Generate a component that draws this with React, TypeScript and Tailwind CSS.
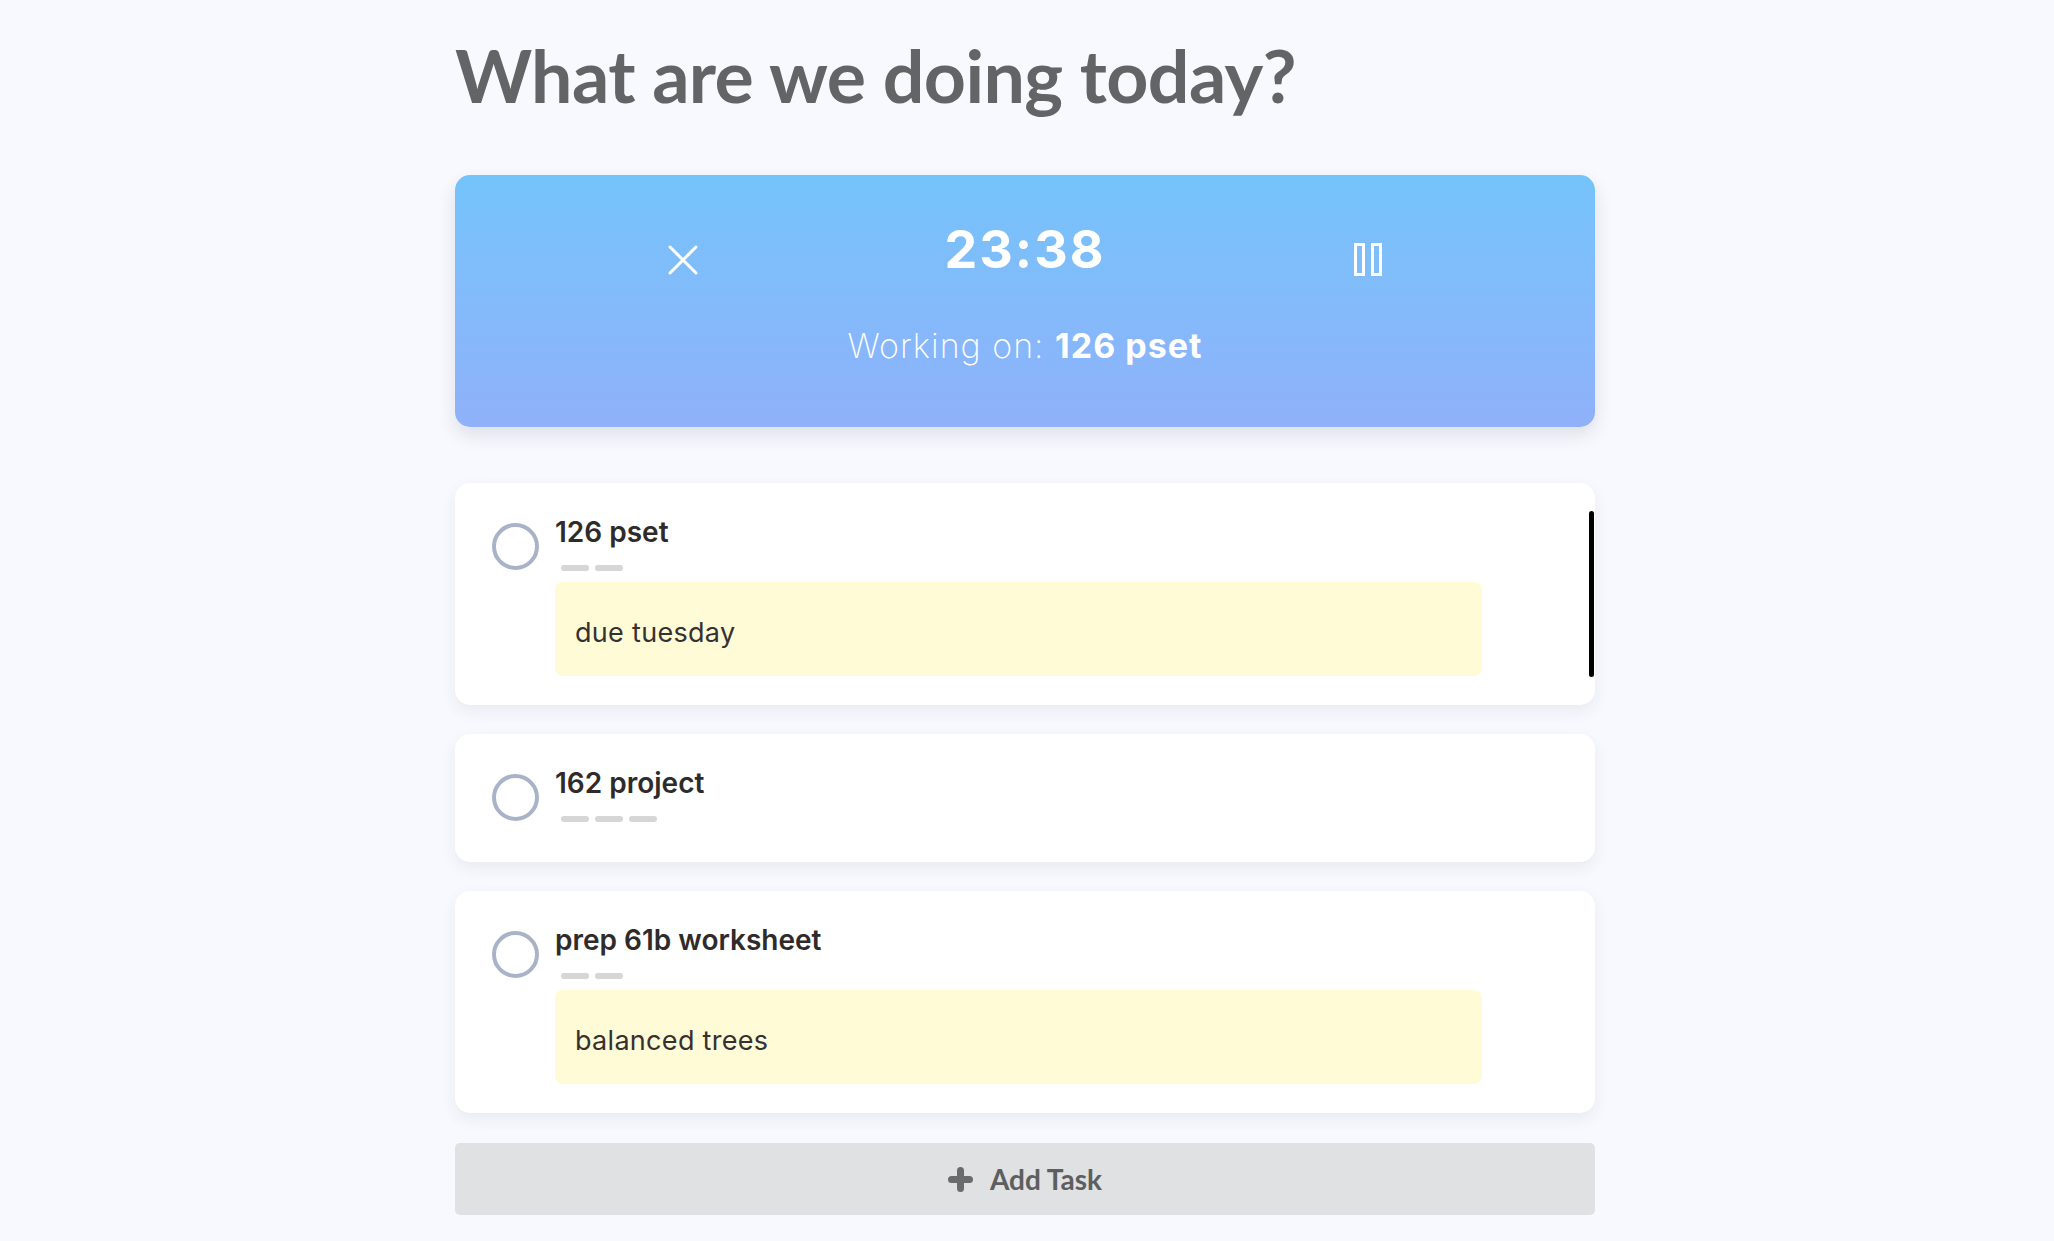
import React from "react";

type Task = {
  title: string;
  dashes: number;
  note?: string;
  scroll?: boolean;
};

const tasks: Task[] = [
  { title: "126 pset", dashes: 2, note: "due tuesday", scroll: true },
  { title: "162 project", dashes: 3 },
  { title: "prep 61b worksheet", dashes: 2, note: "balanced trees" },
];

const inter = { fontFamily: "Inter, 'Noto Sans', sans-serif" };

function TaskCard({ task }: { task: Task }) {
  return (
    <div className="relative flex items-start bg-white rounded-[15px] shadow-[0_6px_16px_rgba(30,40,70,0.07)] pl-[37px] pt-[35px] pb-[29px]">
      <div className="mt-[5px] w-[47px] h-[47px] rounded-full border-[4px] border-[#a9b3c8] shrink-0" />
      <div className="ml-[16px] w-[927px]">
        <div className="text-[28px] leading-none font-semibold text-[#302b2b]">{task.title}</div>
        <div className="flex gap-[6px] ml-[6px] mt-[19px] mb-[11px]">
          {Array.from({ length: task.dashes }).map((_, i) => (
            <div key={i} className="w-[28px] h-[6px] rounded-full bg-[#d6d6d6]" />
          ))}
        </div>
        {task.note && (
          <div className="mt-[4px] h-[94px] flex items-center px-5 pt-[8px] rounded-[8px] bg-[#fffbd6] text-[27px] tracking-[0.3px] text-[#363131]">
            {task.note}
          </div>
        )}
      </div>
      {task.scroll && (
        <div className="absolute right-[1px] top-[28px] bottom-[28px] w-[5px] rounded-full bg-black" />
      )}
    </div>
  );
}

export default function App() {
  return (
    <div className="min-h-screen bg-[#f8f9fe] flex justify-center pr-[4px]" style={inter}>
      <div className="w-[1140px] pb-6">
        <h1
          className="pt-[30px] text-[73.5px] leading-[89px] font-bold text-[#626466] tracking-[-0.6px]"
          style={{ fontFamily: "Lato, sans-serif" }}>
          What are we doing today?
        </h1>

        <div className="mt-[56px] h-[252px] rounded-[15px] bg-gradient-to-b from-[#74c3fb] to-[#8fb1fa] shadow-[0_8px_18px_rgba(30,40,70,0.12)] pt-[49px] text-white">
          <div className="grid grid-cols-[1fr_auto_1fr] items-start px-[213px]">
            <svg className="mt-[21px] justify-self-start" width="30" height="30" viewBox="0 0 30 30" fill="none">
              <path d="M2 2 L28 28 M28 2 L2 28" stroke="white" strokeWidth="3" strokeLinecap="round" />
            </svg>
            <div className="text-[52px] leading-none font-bold tracking-[2px]">23:38</div>
            <svg className="mt-[19px] justify-self-end" width="28" height="33" viewBox="0 0 28 33" fill="none">
              <rect x="1.5" y="1.5" width="8" height="30" stroke="white" strokeWidth="3" />
              <rect x="18.5" y="1.5" width="8" height="30" stroke="white" strokeWidth="3" />
            </svg>
          </div>
          <div className="mt-[53px] text-center text-[34px] leading-none tracking-[1px]">
            <span className="font-extralight">Working on: </span>
            <span className="font-bold">126 pset</span>
          </div>
        </div>

        <div className="mt-[56px] flex flex-col gap-[29px]">
          {tasks.map((t) => (
            <TaskCard key={t.title} task={t} />
          ))}
        </div>

        <button className="mt-[30px] w-full h-[72px] rounded-[5px] bg-[#e0e1e3] flex items-center justify-center gap-[17px] text-[#5d5e60]">
          <svg width="25" height="25" viewBox="0 0 25 25" fill="none">
            <path d="M12.5 3.5 V21.5 M3.5 12.5 H21.5" stroke="#6b6b6d" strokeWidth="7" strokeLinecap="round" />
          </svg>
          <span className="text-[28px] font-bold" style={{ fontFamily: "Lato, sans-serif" }}>
            Add Task
          </span>
        </button>
      </div>
    </div>
  );
}
